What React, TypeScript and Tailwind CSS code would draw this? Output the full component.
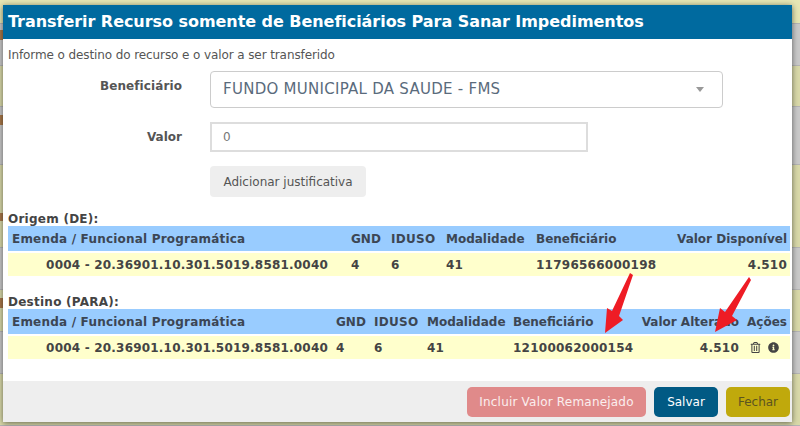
import { FaInfoCircle, FaRegTrashAlt } from "react-icons/fa";

const origemCols = "grid-cols-[339px_40px_55px_90px_134px_1fr]";
const destinoCols = "grid-cols-[324px_38px_53px_86px_112px_1fr_48px]";

function Backdrop() {
  const bands = [
    "h-[24px] bg-[#e6e6b4]",
    "h-[42px] bg-[#c9c9c9]",
    "h-[41px] bg-[#d9d9a9]",
    "h-[58px] bg-[#c9c9c9]",
    "h-[83px] bg-[#d9d9a9]",
    "h-[42px] bg-[#c9c9c9]",
    "h-[42px] bg-[#d9d9a9]",
    "h-[42px] bg-[#c9c9c9]",
    "h-[52px] bg-[#d9d9a9]",
  ];
  return (
    <div className="flex flex-col h-full">
      {bands.map((b, i) => (
        <div key={i} className={`${b} border-b border-[#b5b5b5]`} />
      ))}
    </div>
  );
}

function Arrow({ className, viewBox, points }: { className: string; viewBox: string; points: string }) {
  return (
    <svg viewBox={viewBox} className={className} fill="#ee1c25">
      <polygon points={points} />
    </svg>
  );
}

export default function App() {
  return (
    <div className="relative w-[800px] h-[426px] overflow-hidden font-['DejaVu_Sans',sans-serif] text-[#444]">
      <Backdrop />
      <div className="absolute left-0 top-[30px] w-[3px] h-[10px] bg-[#a9794a]" />
      <div className="absolute left-0 top-[115px] w-[3px] h-[10px] bg-[#a9794a]" />
      <div className="absolute left-0 top-[213px] w-[3px] h-[8px] bg-[#a9794a]" />
      <div className="absolute left-0 top-[298px] w-[3px] h-[10px] bg-[#a9794a]" />
      <div className="absolute left-[3px] top-[5px] w-[789px] h-[417px] bg-white flex flex-col shadow-[0_1px_6px_rgba(0,0,0,0.55)]">
        <div className="h-[34px] shrink-0 bg-[#006a9f] text-white font-bold text-[16px] tracking-[-0.05px] pl-[5px] flex items-center">
          Transferir Recurso somente de Beneficiários Para Sanar Impedimentos
        </div>
        <div className="pl-[5px] pt-[9px] text-[12px] leading-[15px] tracking-[-0.1px] text-[#555]">
          Informe o destino do recurso e o valor a ser transferido
        </div>
        <div className="flex mt-[8px] items-start">
          <div className="w-[179px] pt-[6px] text-right font-bold text-[12px] tracking-[0.1px] text-[#555]">Beneficiário</div>
          <div className="ml-[28px] w-[513px] h-[37px] border border-[#ccc] rounded-[4px] flex items-center pl-[12px] pr-[18px] justify-between text-[15px] text-[#5a6b7c] tracking-[0.27px]">
            <span>FUNDO MUNICIPAL DA SAUDE - FMS</span>
            <span className="w-0 h-0 border-x-[4px] border-x-transparent border-t-[5px] border-t-[#999]" />
          </div>
        </div>
        <div className="flex mt-[14px] items-center">
          <div className="w-[179px] text-right font-bold text-[12px] text-[#555]">Valor</div>
          <div className="ml-[28px] w-[378px] h-[30px] border-2 border-[#ddd] flex items-center pl-[11px] text-[12px] text-[#777]">
            0
          </div>
        </div>
        <div className="ml-[207px] mt-[14px] w-[156px] h-[31px] rounded-[4px] bg-[#eee] flex items-center justify-center text-[12px] text-[#555]">
          Adicionar justificativa
        </div>

        <div className="ml-[5px] mt-[15px] pt-[1px] font-bold text-[12px] leading-[13px] tracking-[0.25px] text-[#444]">Origem (DE):</div>
        <div className="ml-[5px] mr-[2px] font-bold text-[12px]">
          <div className={`grid ${origemCols} h-[25px] items-center bg-[#99ccff] pl-[4px] pr-[3px] text-[#3c4654]`}>
            <span className="tracking-[0.2px]">Emenda / Funcional Programática</span>
            <span>GND</span>
            <span className="tracking-[0.3px]">IDUSO</span>
            <span>Modalidade</span>
            <span>Beneficiário</span>
            <span className="text-right">Valor Disponível</span>
          </div>
          <div className={`grid ${origemCols} mt-[2px] h-[23px] items-center bg-[#ffffcc] pl-[4px] pr-[3px] text-[#444] tracking-[0.25px]`}>
            <span className="text-right pr-[23px] tracking-[0.2px]">0004 - 20.36901.10.301.5019.8581.0040</span>
            <span>4</span>
            <span>6</span>
            <span>41</span>
            <span>11796566000198</span>
            <span className="text-right">4.510</span>
          </div>
        </div>

        <div className="ml-[5px] mt-[19px] pt-[1px] font-bold text-[12px] leading-[13px] tracking-[0.25px] text-[#444]">Destino (PARA):</div>
        <div className="ml-[5px] mr-[2px] font-bold text-[12px]">
          <div className={`grid ${destinoCols} h-[25px] items-center bg-[#99ccff] pl-[4px] pr-[3px] text-[#3c4654]`}>
            <span className="tracking-[0.2px]">Emenda / Funcional Programática</span>
            <span>GND</span>
            <span className="tracking-[0.3px]">IDUSO</span>
            <span>Modalidade</span>
            <span>Beneficiário</span>
            <span className="text-right">Valor Alterado</span>
            <span className="text-right">Ações</span>
          </div>
          <div className={`grid ${destinoCols} mt-[2px] h-[23px] items-center bg-[#ffffcc] pl-[4px] pr-[3px] text-[#444] tracking-[0.25px]`}>
            <span className="text-right pr-[8px] tracking-[0.2px]">0004 - 20.36901.10.301.5019.8581.0040</span>
            <span>4</span>
            <span>6</span>
            <span>41</span>
            <span>12100062000154</span>
            <span className="text-right">4.510</span>
            <span className="flex items-center justify-end gap-[7px] pr-[8px]">
              <FaRegTrashAlt size={11} />
              <FaInfoCircle size={11} />
            </span>
          </div>
        </div>

        <div className="mt-auto h-[41px] bg-[#eee] flex items-center justify-end gap-[8px] pr-[2px] text-[12px]">
          <div className="w-[179px] h-[30px] rounded-[5px] bg-[#e08a8a] text-[#fbeeee] tracking-[0.2px] flex items-center justify-center">
            Incluir Valor Remanejado
          </div>
          <div className="w-[64px] h-[30px] rounded-[5px] bg-[#015a84] text-white flex items-center justify-center">
            Salvar
          </div>
          <div className="w-[64px] h-[30px] rounded-[5px] bg-[#c0a90c] text-[#5c5420] flex items-center justify-center">
            Fechar
          </div>
        </div>
      </div>
      <Arrow
        className="absolute left-[604px] top-[272px] w-[30px] h-[62px]"
        viewBox="0 0 30 62"
        points="26,1 29,3 15,44 19,48 1,61 3,36 8,39"
      />
      <Arrow
        className="absolute left-[713px] top-[275px] w-[40px] h-[59px]"
        viewBox="0 0 40 59"
        points="36,2 38,5 19,41 24,45 2,57 7,33 12,37"
      />
    </div>
  );
}
